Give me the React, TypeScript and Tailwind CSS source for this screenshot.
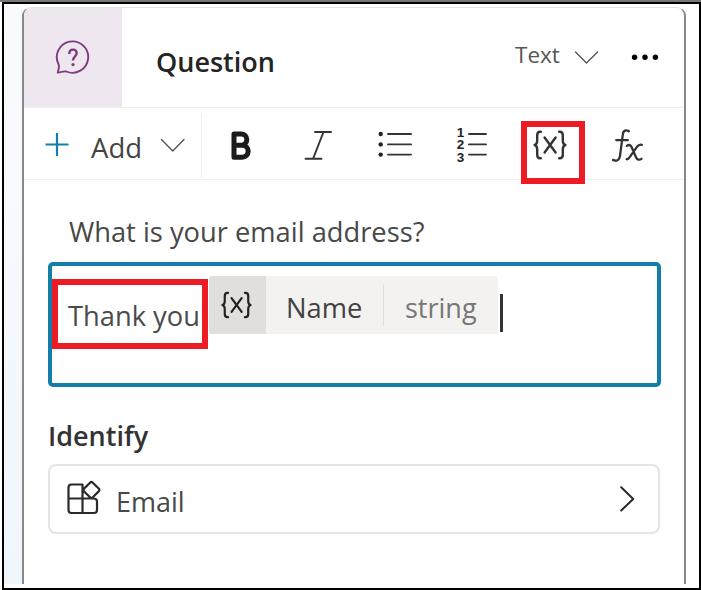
import type { ReactNode } from "react";

type IconProps = {
  box: string;
  className: string;
  children: ReactNode;
};

function Icon({ box, className, children }: IconProps) {
  return (
    <svg
      viewBox={box}
      className={`shrink-0 ${className}`}
      fill="none"
      stroke="currentColor"
      strokeLinecap="round"
      strokeLinejoin="round"
      aria-hidden="true"
    >
      {children}
    </svg>
  );
}

function VariableIcon({ className }: { className: string }) {
  return (
    <Icon box="0 0 36 30" className={className}>
      <path
        strokeWidth="2.400"
        d="M8.800 1.700h-.6C5.800 1.700 5.200 3.200 5.200 5.200v5.300c0 2.500-.9 4-2.600 4.500 1.700.5 2.600 2 2.600 4.500v5.300c0 2 .6 3.500 3 3.500h.6M27.200 1.700h.6c2.400 0 3 1.500 3 3.500v5.300c0 2.500.9 4 2.600 4.500-1.700.5-2.600 2-2.600 4.500v5.300c0 2-.6 3.500-3 3.500h-.6M12.600 7.500l11 15M23.600 7.500 12.600 22.500"
      />
    </Icon>
  );
}

function Header() {
  return (
    <div className="flex h-[100px] shrink-0 items-start border-b border-[#efeeec]">
      <div className="flex h-full w-[98px] items-start rounded-tl-[7px] bg-[#eee7ef] text-[#813a7c]">
        <Icon box="54 39 38 37" className="ml-[30px] mt-[31px] h-[37px] w-[38px]">
          <path
            strokeWidth="1.9"
            d="M57.700 72.500c1.500-4.300 1.700-6.200.8-8.300A15.700 15.700 0 1 1 66.300 71.500c-2.300-.5-4.600.5-8.600 1Z"
          />
          <path strokeWidth="2.400" strokeLinecap="butt" d="M69.300 54c0-2.900 1.500-4.400 3.700-4.400s3.700 1.400 3.700 3.500c0 3.500-3.700 3.500-3.700 7.300" />
          <circle cx="73" cy="64.600" r="1.600" fill="currentColor" stroke="none" />
        </Icon>
      </div>
      <div className="ml-[34px] mt-[40px] w-[359px] text-[27px] font-semibold leading-none text-[#242424]">
        Question
      </div>
      <div className="mt-[36px] w-[58px] text-[22.5px] leading-none text-[#555]">Text</div>
      <Icon box="574 48 28 20" className="mt-[40px] h-5 w-7 text-[#555]">
        <path strokeWidth="1.400" d="M576.500 52 587.500 63 598.500 52" />
      </Icon>
      <Icon box="630 50 32 14" className="ml-[28px] mt-[42px] h-[14px] w-8 text-black">
        <g fill="currentColor" stroke="none">
          <circle cx="635.600" cy="57.200" r="2.700" />
          <circle cx="646" cy="57.200" r="2.700" />
          <circle cx="656.400" cy="57.200" r="2.700" />
        </g>
      </Icon>
    </div>
  );
}

function Toolbar() {
  return (
    <div className="flex h-[72px] shrink-0 items-start border-b border-[#f1f0ee] text-[#333]">
      <Icon box="44 131 26 27" className="ml-[20px] mt-[23px] h-[27px] w-[26px] text-[#1380ab]">
        <path strokeWidth="2.200" strokeLinecap="butt" d="M45.500 144.500h23M57 133v23" />
      </Icon>
      <div className="ml-[21px] mt-[26px] w-[68px] text-[27.5px] leading-none text-[#444]">Add</div>
      <Icon box="159 134 28 20" className="mt-[26px] h-5 w-7 text-[#555]">
        <path strokeWidth="1.400" d="M161.500 139.500 172.700 151 184 139.500" />
      </Icon>
      <div className="ml-[14px] mt-[6px] h-[64px] w-px bg-[#efeeec]" />
      <Icon box="228 128 28 35" className="ml-[26px] mt-[20px] h-[35px] w-7 text-[#1b1b1b]">
        <path strokeWidth="5" d="M234 134h7.200a5.500 5.500 0 0 1 0 11.200H234Zm0 11.200h8.200a6 6 0 0 1 0 12H234Z" />
      </Icon>
      <Icon box="302 128 32 35" className="ml-[46px] mt-[20px] h-[35px] w-8">
        <path strokeWidth="1.900" d="M315 132h16M305.500 158.800h16M323.500 132 313 158.800" />
      </Icon>
      <Icon box="376 128 40 35" className="ml-[42px] mt-[20px] h-[35px] w-10">
        <path strokeWidth="1.900" d="M388 134h23M388 144.400h23M388 154.600h23" />
        <g fill="#222" stroke="none">
          <circle cx="380.700" cy="134" r="2.200" />
          <circle cx="380.700" cy="144.400" r="2.200" />
          <circle cx="380.700" cy="154.600" r="2.200" />
        </g>
      </Icon>
      <Icon box="452 124 40 42" className="ml-[36px] mt-[16px] h-[42px] w-10">
        <path strokeWidth="1.900" d="M469 134h17M469 144.400h17M469 154.600h17" />
        <text
          fill="#222"
          stroke="none"
          textAnchor="middle"
          className="font-['Liberation_Sans',sans-serif] text-[13.5px] font-bold"
        >
          <tspan x="460.400" y="136.800">1</tspan>
          <tspan x="460.400" y="149.300">2</tspan>
          <tspan x="460.400" y="161.800">3</tspan>
        </text>
      </Icon>
      <VariableIcon className="ml-[40px] mt-[22px] h-[30px] w-9" />
      <Icon box="606 126 40 38" className="ml-[39px] mt-[18px] h-[38px] w-10">
        <path
          strokeWidth="2.300"
          d="M628 131.200c-2.800-1.800-5.800-1-6.200 3.500L619 156c-.6 4.400-3.600 5.600-7 3.900M615.300 140.200h11.500M625.800 146c2.200-1.900 3.900-.8 5 1.600l4.200 9.700c1 2.400 3.200 3.200 5.500 1.500M640.800 144.800c-2-.6-3.300.1-4.800 2l-7.300 10.400c-1 1.500-1.800 2.200-3 2"
        />
      </Icon>
    </div>
  );
}

function MessageEditor() {
  return (
    <div className="relative ml-[24px] mt-[20px] flex h-[125px] w-[613px] items-start rounded-[5px] border-4 border-[#117da8]">
      <div className="ml-[16px] mt-[36px] w-[141px] whitespace-nowrap text-[27.3px] leading-none text-[#4b4b4b]">
        Thank you
      </div>
      <div className="mt-[10px] flex h-[58px] w-[289px] items-start overflow-hidden rounded-[3px] bg-[#f3f2f1]">
        <div className="flex h-full w-[57px] items-start bg-[#e0dfdd] text-[#222]">
          <VariableIcon className="ml-[11px] mt-[15px] h-[28px] w-[33px]" />
        </div>
        <div className="ml-[20px] mt-[18px] w-[97px] text-[27.3px] leading-none text-[#424242]">Name</div>
        <div className="mt-[8px] h-[42px] w-px bg-[#e1dfdd]" />
        <div className="ml-[21px] mt-[18px] text-[27px] leading-none text-[#777]">string</div>
      </div>
      <div className="ml-[2px] mt-[28px] h-[38px] w-[3px] bg-[#333]" />
      <div className="absolute left-0 top-[13px] h-[70px] w-[156px] border-6 border-[#ed1c24]" />
    </div>
  );
}

function IdentifyField() {
  return (
    <>
      <div className="ml-[24px] mt-[35px] h-[42px] text-[27px] font-semibold leading-none text-[#333]">
        Identify
      </div>
      <div className="ml-[24px] flex h-[70px] w-[612px] items-start rounded-lg border-2 border-[#e4e4e4] text-[#2a2a2a]">
        <Icon box="65 479 38 38" className="ml-[15px] mt-[13px] h-[38px] w-[38px]">
          <path
            strokeWidth="2.200"
            d="M82.500 498.500V484.500H71.500a3 3 0 0 0-3 3V510a3 3 0 0 0 3 3H94a3 3 0 0 0 3-3v-8.500a3 3 0 0 0-3-3H68.500M82.500 498.500V513M90 482.700l-5.900 5.900a2 2 0 0 0 0 2.800l5.900 5.900a2 2 0 0 0 2.800 0l5.900-5.900a2 2 0 0 0 0-2.800l-5.900-5.900a2 2 0 0 0-2.800 0Z"
          />
        </Icon>
        <div className="ml-[13px] mt-[22px] w-[500px] text-[27px] leading-none text-[#484848]">Email</div>
        <Icon box="616 483 22 32" className="mt-[17px] h-8 w-[22px]">
          <path strokeWidth="2" d="M621.200 487.200 633.200 499 621.200 510.500" />
        </Icon>
      </div>
    </>
  );
}

export default function App() {
  return (
    <main className="flex h-[590px] w-[701px] flex-col overflow-hidden bg-white font-['Open_Sans','Noto_Sans',sans-serif]">
      <div className="h-[2px] w-full shrink-0 bg-[#777]" />
      <div className="ml-[2px] flex h-[588px] w-[699px] border-2 border-black">
        <div className="mt-[2px] h-[578px] w-[18px] shrink-0 bg-gradient-to-b from-[#fafbff] to-[#f0f7fc]" />
        <div className="relative mt-[3px] flex h-[577px] w-[664px] shrink-0 flex-col rounded-t-[9px] border-x-2 border-t border-x-[#888] border-t-[#e5e4e4] bg-white">
          <Header />
          <Toolbar />
          <div className="ml-[45px] mt-[38px] h-[24px] whitespace-nowrap text-[27.3px] leading-none text-[#484848]">
            What is your email address?
          </div>
          <MessageEditor />
          <IdentifyField />
          <div className="absolute left-[497px] top-[113px] h-[63px] w-[64px] border-6 border-[#ed1c24]" />
        </div>
      </div>
    </main>
  );
}
